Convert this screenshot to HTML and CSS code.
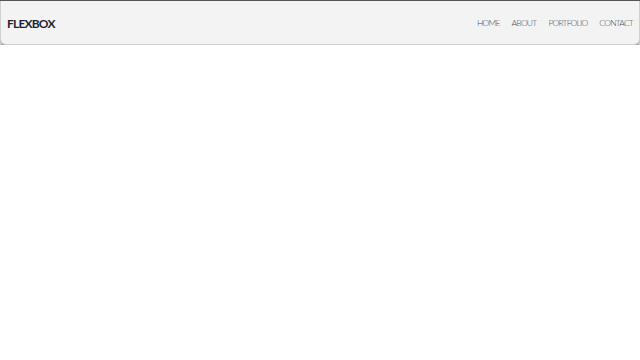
FILE: index.html
```html
<!DOCTYPE html>
<html>
<head>
<meta charset="utf-8">
<link rel="stylesheet" href="styles.css">
</head>
<body>
<header class="navbar">
  <div class="brand">FLEXBOX</div>
  <nav class="links">
    <a href="#">HOME</a>
    <a href="#">ABOUT</a>
    <a href="#">PORTFOLIO</a>
    <a href="#">CONTACT</a>
  </nav>
</header>
</body>
</html>
```
FILE: styles.css
```css
html, body {
  margin: 0;
  padding: 0;
  background: #ffffff;
  font-family: Lato, "Liberation Sans", sans-serif;
}
body {
  border-top: 1px solid #555;
}
.navbar {
  display: flex;
  justify-content: space-between;
  align-items: center;
  height: 44px;
  padding: 1px 6px 0 6px;
  box-sizing: border-box;
  background: #f3f3f4;
  border: 1px solid #d0d0d0;
  border-top: none;
  border-radius: 0 0 6px 6px;
  box-shadow: 0 4px 4px -1px rgba(0,0,0,0.6);
}
.brand {
  font-size: 12px;
  font-weight: 700;
  color: #1f2430;
  letter-spacing: -0.8px;
}
.links {
  display: flex;
  gap: 12px;
}
.links a {
  font-size: 8.5px;
  font-weight: 300;
  color: #4a4f5a;
  text-decoration: none;
  letter-spacing: -0.8px;
}
```
